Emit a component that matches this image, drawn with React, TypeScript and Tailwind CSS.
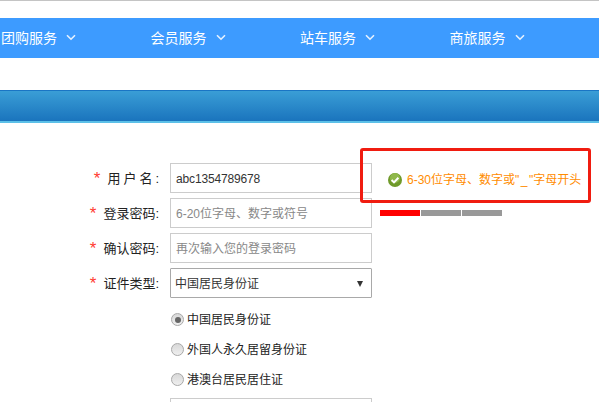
import React from "react";

const font = { fontFamily: '"Liberation Sans","Noto Sans CJK SC",sans-serif' };

function Chevron() {
  return (
    <svg width="10" height="7" viewBox="0 0 10 7" className="ml-[9px] mt-[-1px]" fill="none">
      <path d="M1 1.2 L5 5.2 L9 1.2" stroke="#e6f1ff" strokeWidth="1.6" />
    </svg>
  );
}

function NavItem({ label }: { label: string }) {
  return (
    <div className="flex w-[150px] items-center text-[14px] text-white">
      <span>{label}</span>
      <Chevron />
    </div>
  );
}

function Row({ star, label, spaced, children }: { star: string; label: string; spaced?: boolean; children: React.ReactNode }) {
  return (
    <div className="flex h-[30px] items-center">
      <div className="flex w-[170px] items-center justify-end pr-[11px] text-[13px] text-[#222]">
        <span className={spaced ? "mr-[7px] mt-[1px] text-[17px] leading-none text-[#ff3b30]" : "mr-[7px] mt-[1px] text-[17px] leading-none text-[#ff3b30]"}>{star}</span>
        <span className={spaced ? "mt-[1px] mr-[-3px] tracking-[3px]" : "mt-[1px]"}>{label}</span>
      </div>
      {children}
    </div>
  );
}

function Radio({ label, on }: { label: string; on?: boolean }) {
  return (
    <div className="flex h-[30px] items-center pl-[171px] pt-[1px] text-[12px] text-[#222]">
      <span className="mr-[3px] flex h-[13px] w-[13px] items-center justify-center rounded-full border border-[#a8a8a8] bg-gradient-to-b from-[#d8d8d8] to-[#efefef]">
        {on ? <span className="h-[6px] w-[6px] rounded-full bg-[#666]" /> : null}
      </span>
      <span>{label}</span>
    </div>
  );
}

export default function App() {
  return (
    <div className="relative h-[402px] w-[599px] overflow-hidden bg-white" style={font}>
      <div className="h-px bg-[#c4c4c4]" />
      <div className="mt-[17px] flex h-[40px] bg-[#3d9bff] pl-px">
        <NavItem label="团购服务" />
        <NavItem label="会员服务" />
        <NavItem label="站车服务" />
        <NavItem label="商旅服务" />
      </div>
      <div className="mt-[32px] h-[33px] border-t border-b-[2px] border-t-[#1a75c4] border-b-[#5cc0e8] bg-gradient-to-b from-[#3a9ed6] to-[#1a74bd]" />

      <div className="mt-[40px] flex flex-col gap-[5px]">
        <Row star="*" label="用户名:" spaced>
          <div className="flex h-[30px] w-[202px] items-center border border-[#cccccc] pl-[5px] pt-[1px] text-[12px] tracking-[-0.15px] text-[#333]">abc1354789678</div>
        </Row>
        <Row star="*" label="登录密码:">
          <div className="flex h-[30px] w-[202px] items-center border border-[#cccccc] pl-[5px] pt-[1px] text-[12px] text-[#888]">6-20位字母、数字或符号</div>
        </Row>
        <Row star="*" label="确认密码:">
          <div className="flex h-[30px] w-[202px] items-center border border-[#cccccc] pl-[5px] pt-[1px] text-[12px] text-[#888]">再次输入您的登录密码</div>
        </Row>
        <Row star="*" label="证件类型:">
          <div className="flex h-[30px] w-[202px] items-center justify-between rounded-[1px] border border-[#a9a9a9] pl-[4px] pr-[8px] pt-[1px] text-[12px] text-[#333]">
            <span>中国居民身份证</span>
            <span className="h-0 w-0 border-x-[3.5px] border-t-[6px] border-x-transparent border-t-[#333]" />
          </div>
        </Row>
      </div>

      <div className="mt-[6px]">
        <Radio label="中国居民身份证" on />
        <Radio label="外国人永久居留身份证" />
        <Radio label="港澳台居民居住证" />
      </div>
      <div className="ml-[170px] mt-[4px] h-[30px] w-[202px] border border-[#cccccc]" />

      <div className="absolute left-[360px] top-[148px] flex h-[55px] w-[231px] items-center rounded-[3px] border-[3px] border-[#f01c10] pl-[25px] pt-[8px] text-[12px] text-[#ff8c00]">
        <svg width="14" height="14" viewBox="0 0 14 14" className="mr-[5px] shrink-0">
          <circle cx="7" cy="7" r="7" fill="#6f9a2a" />
          <circle cx="7" cy="5" r="5" fill="#8fb84a" />
          <path d="M3.6 7 L6 9.4 L10.4 4.8" stroke="#fff" strokeWidth="2" fill="none" />
        </svg>
        <span className="whitespace-nowrap">6-30位字母、数字或"<span className="mx-[1.5px]">_</span>"字母开头</span>
      </div>

      <div className="absolute left-[380px] top-[210px] flex gap-px">
        <div className="h-[6px] w-[40px] bg-[#ff0000]" />
        <div className="h-[6px] w-[40px] bg-[#999999]" />
        <div className="h-[6px] w-[40px] bg-[#999999]" />
      </div>
    </div>
  );
}
